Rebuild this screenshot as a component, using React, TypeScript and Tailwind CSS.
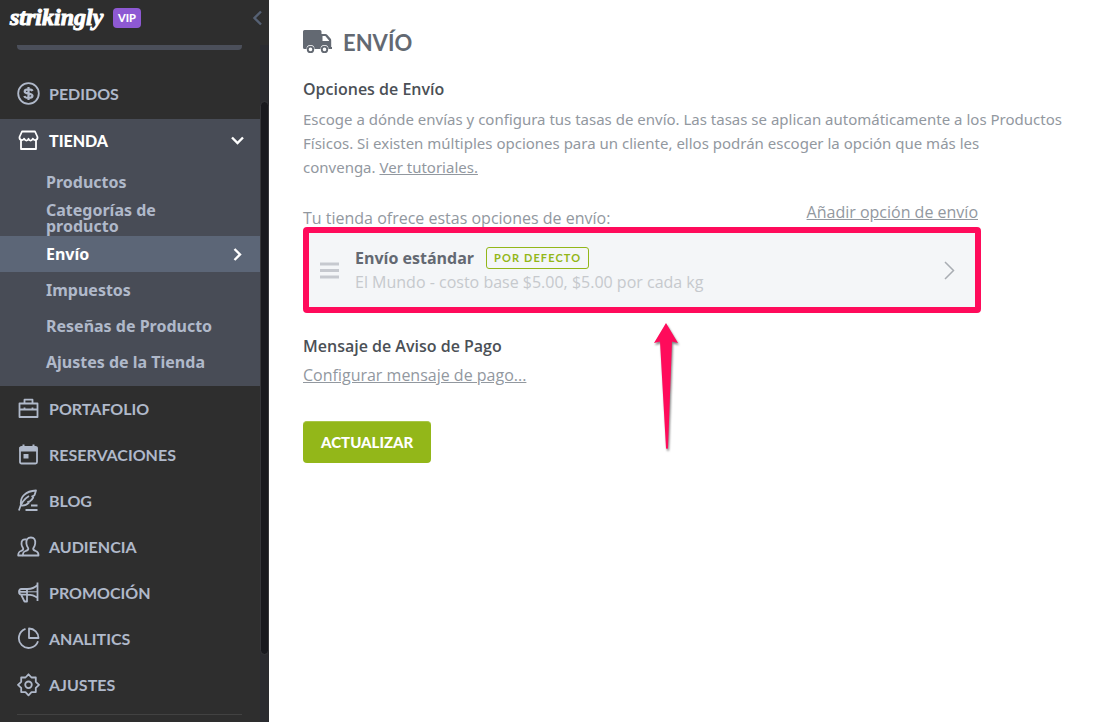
import type { ReactNode } from "react";
import clsx from "clsx";

function Icon({ children }: { children: ReactNode }) {
  return (
    <svg
      width="24"
      height="24"
      viewBox="0 0 24 24"
      fill="none"
      stroke="currentColor"
      strokeWidth="1.8"
      strokeLinejoin="round"
      className="shrink-0"
      aria-hidden="true"
    >
      {children}
    </svg>
  );
}

const icons = {
  orders: (
    <Icon>
      <circle cx="11.500" cy="11.500" r="10.300" />
      <path d="M15.500 9C15 7.700 13.500 7.300 11.500 7.300c-2.300 0-3.800.7-3.800 2.100 0 3.100 7.800 1.200 7.800 4.400 0 1.500-1.600 2.200-4 2.200-2.200 0-3.700-.6-4.200-2M11.500 5v13" strokeWidth="2.200" />
    </Icon>
  ),
  store: (
    <Icon>
      <path d="M5 2.500h13l2.500 5.500c.3 3-3 4.200-4.600 1.600-1.200 2.600-3.500 2.600-4.400.2-.9 2.400-3.200 2.400-4.400-.2C5.500 12.200 2.200 11 2.500 8zM4 11v9h15v-9" />
    </Icon>
  ),
  portfolio: (
    <Icon>
      <path d="M2.500 6.500h18v13.500h-18zM7.500 6.500V2.700h8v3.800M2.500 12.500h18M7.500 10.500v2.500M15.500 10.500v2.500" />
    </Icon>
  ),
  bookings: (
    <Icon>
      <rect x="3" y="4" width="17" height="16.500" rx="1.500" />
      <path d="M2.500 4h18v4.500h-18z" fill="currentColor" stroke="none" />
      <path d="M6.500 1.500v3M16.500 1.500v3" strokeWidth="2" />
      <path d="M6.500 11h5v4.500h-5z" fill="currentColor" stroke="none" />
    </Icon>
  ),
  blog: (
    <Icon>
      <path d="M2 21.500C3.500 14.500 7 10 12 7M4 16.500C2.500 7.500 9 2 19 1.500c-.8 2-.8 3.200-1.800 5l-2 .8 1 1.200c-1 2-2 3-3.500 4l-1.700.3.700 1c-2 2.200-4.500 3-7.700 2.700M14 16.500h6.500M8.500 21h12" />
    </Icon>
  ),
  audience: (
    <Icon>
      <path d="M6 20.500h15.500c.2-3-.6-3.700-2.800-4.500-1.500-.5-2.700-.8-2.500-2.500.2-1 1.700-2 2-5 .3-4-1-6-4.300-6s-4.800 2-4.500 6c.3 3 1.700 4 1.900 5 .2 1.700-1 2-2.600 2.500-2.200.8-3 1.500-2.700 4.500z" />
      <path d="M9.500 4.500C6 3.800 4.300 5.500 4.500 9c.1 2.500 1.500 3.500 1.700 4.800.2 1.400-.8 1.700-2.200 2.200-2.200.8-2.800 1.500-2.800 4.500H6" />
    </Icon>
  ),
  promotion: (
    <Icon>
      <path d="M20.500 1.500V20M20.500 4C17.500 7 14.500 8 10.500 8H4.500C3 8 2 8.800 2 10.700s1 2.900 2.500 2.900h6c4 0 7 1 10 3.300M10 8v12.500H7.500l-3.500-7M2 10.800h8" />
      <path d="M10 10.800h10.500" strokeWidth="1" />
    </Icon>
  ),
  analytics: (
    <Icon>
      <path d="M8.500 1.900A9.800 9.800 0 1 0 21 14.200" />
      <path d="M12 1.500v9.500h9.500c0-5.300-4.200-9.500-9.500-9.500z" />
    </Icon>
  ),
  settings: (
    <Icon>
      <path d="M11.500 1.300l3 3.200h4.300v4.300l3.200 3-3.200 3v4.300h-4.300l-3 3.200-3-3.200H4.200v-4.300l-3.200-3 3.200-3V4.500h4.300z" />
      <circle cx="11.500" cy="11.800" r="3.300" />
    </Icon>
  ),
};

const storeLinks = [
  "Productos",
  "Categorías de producto",
  "Envío",
  "Impuestos",
  "Reseñas de Producto",
  "Ajustes de la Tienda",
];

const lowerItems = [
  { label: "Portafolio", icon: icons.portfolio },
  { label: "Reservaciones", icon: icons.bookings },
  { label: "Blog", icon: icons.blog },
  { label: "Audiencia", icon: icons.audience },
  { label: "Promoción", icon: icons.promotion },
  { label: "Analitics", icon: icons.analytics },
  { label: "Ajustes", icon: icons.settings },
];

function NavItem({ label, icon }: { label: string; icon: ReactNode }) {
  return (
    <a href="#" className="flex h-[46px] items-center gap-2 pl-[17px] font-['Lato',sans-serif] text-base font-bold uppercase text-[#b0b9ca]">
      {icon}
      {label}
    </a>
  );
}

function Sidebar() {
  return (
    <aside className="flex h-screen w-[269px] shrink-0 flex-col overflow-hidden bg-[#2e2e2e]">
      <header className="flex h-[45px] shrink-0 items-start pl-[10px] pr-[6px]">
        <a
          href="#"
          className="w-[95px] font-['Liberation_Serif',serif] text-2xl font-bold italic leading-[34px] text-white [-webkit-text-stroke:1px_white]"
        >
          strikingly
        </a>
        <span className="ml-2 mt-2 rounded-sm bg-[#8e59d3] px-[5px] font-['Lato',sans-serif] text-[11px] font-black leading-5 text-white">
          VIP
        </span>
        <button aria-label="Contraer menú" className="ml-auto mt-[10px] text-[#566174]">
          <svg width="11" height="16" viewBox="0 0 11 16" fill="none" stroke="currentColor" strokeWidth="2.400">
            <path d="M9 1.500L2.500 8L9 14.500" />
          </svg>
        </button>
      </header>

      <div className="flex min-h-0 grow">
        <nav className="w-[260px] overflow-hidden">
          <div className="ml-[17px] mr-[18px] h-[5px] rounded-b-sm bg-[#4b4f5a]" />
          <div className="pt-[21px]">
            <NavItem label="Pedidos" icon={icons.orders} />
          </div>

          <div className="mt-[2px] bg-[#484c56] pb-[6px]">
            <button className="flex h-[45px] w-full items-center gap-2 pb-[2px] pl-[17px] pr-4 font-['Lato',sans-serif] text-base font-black uppercase text-white">
              {icons.store}
              Tienda
              <svg className="ml-auto" width="13" height="9" viewBox="0 0 13 9" fill="none" stroke="currentColor" strokeWidth="2.400">
                <path d="M1 1.500l5.500 5.500L12 1.500" />
              </svg>
            </button>
            {storeLinks.map((label) => (
              <a
                key={label}
                href="#"
                className={clsx(
                  "flex h-9 items-center justify-between pl-[46px] pr-[18px] font-['Noto_Sans',sans-serif] text-base font-bold leading-4",
                  label === "Envío" ? "bg-[#5c6677] text-white" : "text-[#b0b9ca]"
                )}
              >
                <span className="max-w-[170px]">{label}</span>
                {label === "Envío" && (
                  <svg width="9" height="13" viewBox="0 0 9 13" fill="none" stroke="currentColor" strokeWidth="2.400">
                    <path d="M1.500 1L7 6.500L1.500 12" />
                  </svg>
                )}
              </a>
            ))}
          </div>

          {lowerItems.map((item) => (
            <NavItem key={item.label} {...item} />
          ))}
          <hr className="ml-[17px] mr-[18px] mt-[6px] border-[#424242]" />
        </nav>

        {/* Scroll track */}
        <div className="w-[9px] bg-[#2a2b30] pt-14">
          <div className="h-[554px] rounded-full border border-[#35363a] bg-[#18191e]" />
        </div>
      </div>
    </aside>
  );
}

function Arrow() {
  return (
    <svg
      className="absolute left-[350px] top-full mt-[9px] drop-shadow-[1px_2px_1px_rgba(0,0,0,0.5)]"
      width="26"
      height="130"
      viewBox="0 0 26 130"
      aria-hidden="true"
    >
      <path d="M13 1L25 21L19 19.500L15 126Q14 128 13 126L7 19.500L1 21Z" fill="#ff0b5b" />
    </svg>
  );
}

function ShippingOption() {
  return (
    <div className="relative">
      <button className="flex h-[86px] w-full items-center rounded-sm border-[6px] border-[#ff0b5b] bg-[#f4f6f8] pl-[11px] pr-5 text-left">
        <svg width="19" height="17" viewBox="0 0 19 17" stroke="#c6c9cf" strokeWidth="3" className="shrink-0">
          <path d="M0 2h19M0 8.500h19M0 15h19" />
        </svg>
        <span className="ml-4 block grow">
          <span className="flex items-center gap-3">
            <span className="font-bold leading-6 text-[#636972]">Envío estándar</span>
            <span className="rounded-[3px] border border-[#93b719] px-[7px] font-['Lato',sans-serif] text-[11px] font-bold uppercase leading-5 tracking-widest text-[#93b719]">
              Por defecto
            </span>
          </span>
          <span className="block leading-6 text-[#c6c9cd]">El Mundo - costo base $5.00, $5.00 por cada kg</span>
        </span>
        <svg width="11" height="19" viewBox="0 0 11 19" fill="none" stroke="#a9adb3" strokeWidth="1.500">
          <path d="M1 1l8.500 8.500L1 18" />
        </svg>
      </button>
      <Arrow />
    </div>
  );
}

export default function App() {
  return (
    <div className="flex min-h-screen bg-white font-['Open_Sans',sans-serif] text-base text-[#92989f]">
      <Sidebar />
      <main className="min-w-0 grow pl-[34px] pt-[26px]">
        <h1 className="flex h-8 items-center gap-[10px] font-['Lato',sans-serif] text-[22px] font-bold uppercase text-[#636972]">
          <svg width="30" height="24" viewBox="0 0 30 24" fill="currentColor" aria-hidden="true">
            <path
              fillRule="evenodd"
              d="M1.500 0H17q1.500 0 1.500 1.500V4h4q1 0 1.700.7l3.300 3.800q.7.700.7 1.700V17h.8v2H25.500a4 4 0 0 0-8 0h-6a4 4 0 0 0-8 0H1.500Q0 19 0 17.500v-16Q0 0 1.500 0zM19.500 6v5H26v-.6L22.300 6z"
            />
            <path fillRule="evenodd" d="M7.500 15.700a3.700 3.700 0 1 1 0 7.400a3.700 3.700 0 1 1 0-7.400zm0 1.900a1.800 1.800 0 1 0 0 3.600a1.800 1.800 0 1 0 0-3.600z" />
            <path fillRule="evenodd" d="M21.500 15.700a3.700 3.700 0 1 1 0 7.400a3.700 3.700 0 1 1 0-7.400zm0 1.900a1.800 1.800 0 1 0 0 3.600a1.800 1.800 0 1 0 0-3.600z" />
          </svg>
          Envío
        </h1>

        <h2 className="mt-[19px] font-semibold leading-6 text-[#4b5056]">Opciones de Envío</h2>
        <p className="mt-[6px] font-['Noto_Sans',sans-serif] text-[15px] leading-6">
          Escoge a dónde envías y configura tus tasas de envío. Las tasas se aplican automáticamente a los Productos
          <br />
          Físicos. Si existen múltiples opciones para un cliente, ellos podrán escoger la opción que más les
          <br />
          convenga.{" "}
          <a href="#" className="underline">
            Ver tutoriales.
          </a>
        </p>

        <section className="mt-6 max-w-[678px]">
          <div className="flex h-6 justify-between pr-[3px] leading-[18px]">
            <p className="self-end">Tu tienda ofrece estas opciones de envío:</p>
            <a href="#" className="self-start underline">
              Añadir opción de envío
            </a>
          </div>
          <ShippingOption />
        </section>

        <h2 className="mt-[21px] font-semibold leading-6 text-[#4b5056]">Mensaje de Aviso de Pago</h2>
        <a href="#" className="mt-[5px] inline-block leading-6 underline">
          Configurar mensaje de pago...
        </a>
        <div className="mt-[34px]">
          <button className="h-[42px] rounded-sm border-t border-[#a9c647] bg-[#93b719] px-[18px] font-['Lato',sans-serif] text-[15px] font-black uppercase text-white">
            Actualizar
          </button>
        </div>
      </main>
    </div>
  );
}
